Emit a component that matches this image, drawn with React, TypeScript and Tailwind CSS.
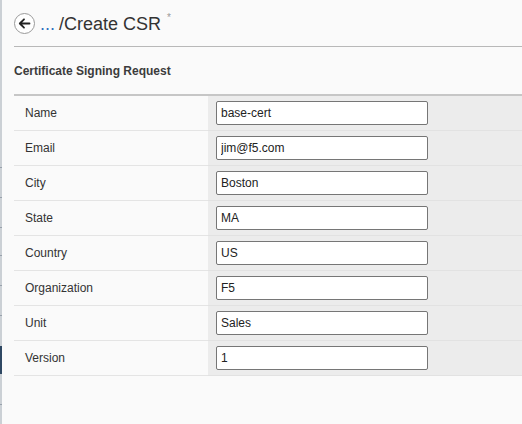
import { FC } from 'react';

const fields = [
  { label: 'Name', value: 'base-cert' },
  { label: 'Email', value: 'jim@f5.com' },
  { label: 'City', value: 'Boston' },
  { label: 'State', value: 'MA' },
  { label: 'Country', value: 'US' },
  { label: 'Organization', value: 'F5' },
  { label: 'Unit', value: 'Sales' },
  { label: 'Version', value: '1' },
];

// peek of the collapsed nav on the left edge
const SideStrip: FC = () => (
  <div className="flex w-[2px] shrink-0 flex-col bg-[#cbd0d5]">
    <div className="h-[167px]" />
    <div className="h-[30px] border-t border-[#98a1ab]" />
    <div className="h-[30px] border-t border-[#98a1ab]" />
    <div className="h-[28px] border-t border-[#98a1ab]" />
    <div className="h-[30px] border-t border-[#98a1ab]" />
    <div className="h-[30px] border-t border-[#98a1ab]" />
    <div className="h-[31px] border-t border-[#98a1ab]" />
    <div className="h-[28px] bg-[#2f4863]" />
    <div className="h-[30px]" />
    <div className="flex-1 border-t border-[#98a1ab]" />
  </div>
);

const BackButton: FC = () => (
  <button className="flex h-[21px] w-[21px] items-center justify-center rounded-full border border-[#9a9a9a] bg-white">
    <svg width="13" height="13" viewBox="0 0 13 13" fill="none">
      <path
        d="M11.5 6.5H2M6 2.3L1.8 6.5L6 10.7"
        stroke="#222"
        strokeWidth="1.8"
        strokeLinecap="round"
        strokeLinejoin="round"
      />
    </svg>
  </button>
);

const FieldRow: FC<{ label: string; value: string }> = ({ label, value }) => (
  <div className="flex h-[35px]">
    <div className="flex w-[194px] items-center border-b border-[#e4e4e4] pl-[11px] text-[12px] text-[#333]">
      {label}
    </div>
    <div className="flex flex-1 items-center border-b border-[#e2e2e2] bg-[#ececec] pl-[8px]">
      <input
        className="h-[24px] w-[212px] rounded-[2px] border border-[#767676] bg-white px-[4px] text-[12px] text-[#222] outline-none"
        defaultValue={value}
      />
    </div>
  </div>
);

export default function App() {
  return (
    <div className="flex h-[424px] w-[522px] overflow-hidden bg-[#fafafa] font-['Liberation_Sans',Arial,sans-serif]">
      <SideStrip />
      <div className="flex flex-1 flex-col pl-[12px]">
        <div className="flex h-[47px] items-center border-b border-[#b8b8b8] pt-[1px]">
          <BackButton />
          <span className="ml-[5px] text-[18px] leading-none text-[#2d6fc0]">...</span>
          <span className="ml-[4px] text-[18px] leading-none text-[#333]">/Create CSR</span>
          <span className="mb-[12px] ml-[6px] text-[10px] leading-none text-[#999]">*</span>
        </div>
        <div className="flex h-[49px] items-center border-b-2 border-[#c6c6c6] text-[12px] font-bold text-[#3c3c3c]">
          Certificate Signing Request
        </div>
        {fields.map((f) => (
          <FieldRow key={f.label} label={f.label} value={f.value} />
        ))}
      </div>
    </div>
  );
}
